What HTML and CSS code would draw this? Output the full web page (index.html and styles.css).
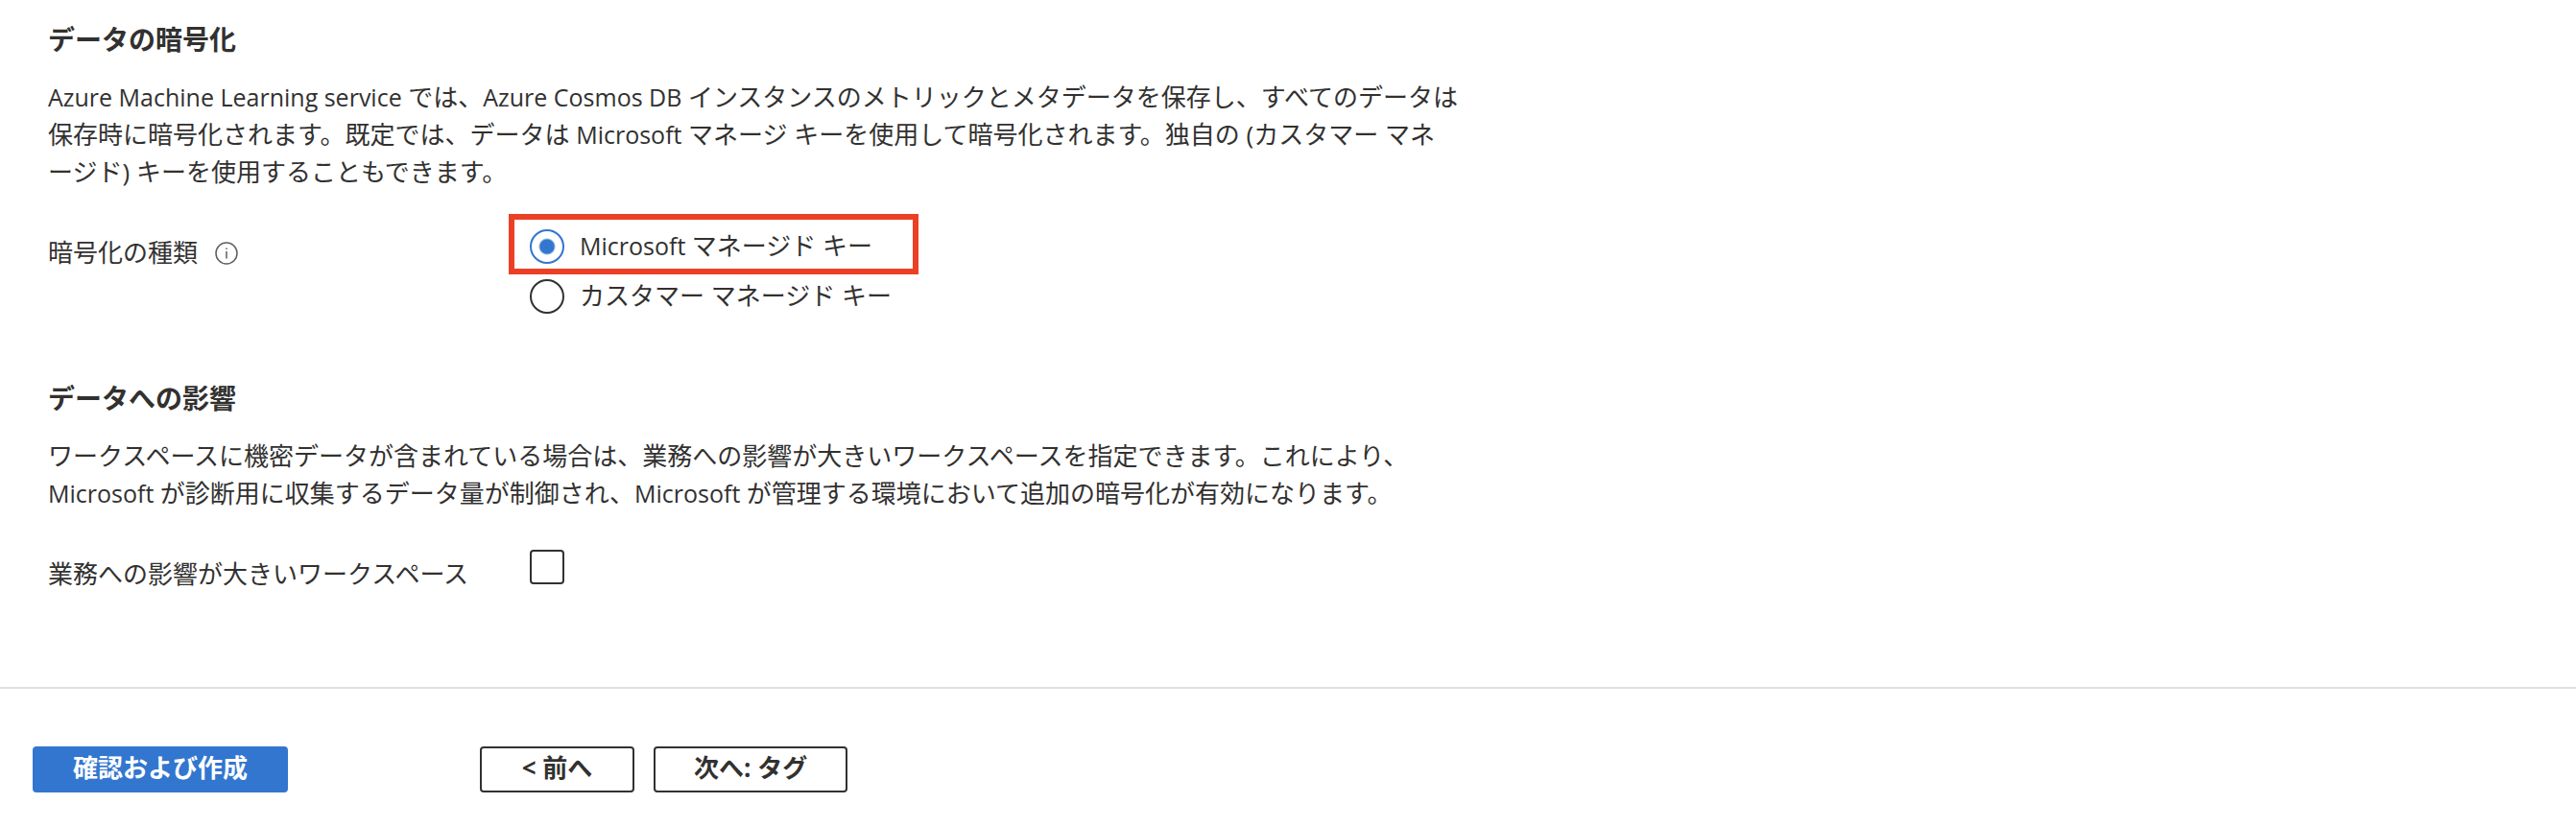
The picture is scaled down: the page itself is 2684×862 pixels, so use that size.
FILE: index.html
```html
<!DOCTYPE html>
<html lang="ja">
<head>
<meta charset="utf-8">
<meta name="viewport" content="width=device-width, initial-scale=1">
<title>Machine Learning ワークスペースの作成</title>
<link rel="stylesheet" href="styles.css">
</head>
<body>
<form class="page">
  <main class="content">
    <section class="section">
      <h2 class="heading">データの暗号化</h2>
      <p class="description"><span class="latin">Azure Machine Learning service </span>では、<span class="latin">Azure Cosmos DB </span>インスタンスのメトリックとメタデータを保存し、すべてのデータは<br>保存時に暗号化されます。既定では、データは <span class="latin">Microsoft </span>マネージ キーを使用して暗号化されます。独自の (カスタマー マネ<br>ージド) キーを使用することもできます。</p>
      <div class="field" role="radiogroup" aria-labelledby="encryption-label">
        <div class="field-label">
          <span id="encryption-label">暗号化の種類</span>
          <svg class="info" viewBox="0 0 24 24" role="img" aria-label="情報"><circle cx="12" cy="12" r="11"/><path d="M12 10v7.500M12 6.500v1.500"/></svg>
        </div>
        <div class="options">
          <label class="option option-highlight"><input class="radio" type="radio" name="encryption" checked><span><span class="latin">Microsoft </span>マネージド キー</span></label>
          <label class="option"><input class="radio" type="radio" name="encryption"><span>カスタマー マネージド キー</span></label>
        </div>
      </div>
    </section>
    <section class="section">
      <h2 class="heading">データへの影響</h2>
      <p class="description">ワークスペースに機密データが含まれている場合は、業務への影響が大きいワークスペースを指定できます。これにより、<br><span class="latin">Microsoft </span>が診断用に収集するデータ量が制御され、<span class="latin">Microsoft </span>が管理する環境において追加の暗号化が有効になります。</p>
      <div class="field">
        <label class="field-label" for="impact">業務への影響が大きいワークスペース</label>
        <div class="check-cell"><input class="checkbox" type="checkbox" id="impact"></div>
      </div>
    </section>
  </main>
  <footer class="footer">
    <button class="button button-primary" type="submit">確認および作成</button>
    <div class="steps">
      <button class="button" type="button">&lt; 前へ</button>
      <button class="button" type="button">次へ: タグ</button>
    </div>
  </footer>
</form>
</body>
</html>
```
FILE: styles.css
```css
* {
  box-sizing: border-box;
}

body {
  margin: 0;
  background: #fff;
  color: #323130;
  font-family: "Open Sans", "Noto Sans CJK JP", sans-serif;
  font-size: 26px;
  line-height: 39px;
}

.content {
  display: flex;
  flex-direction: column;
  gap: 60px;
  padding: 20px 50px 98px;
}

.heading {
  margin: 0 0 20px;
  font-size: 28px;
  line-height: 42px;
  font-weight: 700;
}

.description {
  max-width: 1484px;
  margin: 0 0 24px;
}

.latin {
  font-size: 25px;
}

.field {
  display: grid;
  grid-template-columns: 480px 1fr;
  align-items: start;
}

.field-label {
  display: flex;
  align-items: center;
  gap: 18px;
  padding-top: 21px;
}

.info {
  width: 24px;
  height: 24px;
  fill: none;
  stroke: #605e5c;
  stroke-width: 1.5;
}

.options {
  display: flex;
  flex-direction: column;
  align-items: flex-start;
}

.option {
  display: flex;
  align-items: center;
  gap: 16px;
  padding: 3px 22px 6px;
}

.option-highlight {
  padding: 8px 42px 4px 16px;
  border: 6px solid #eb4025;
}

.radio,
.checkbox {
  appearance: none;
  flex: none;
  width: 36px;
  height: 36px;
  margin: 0;
  border: 2px solid #323130;
  background: #fff;
}

.radio {
  border-radius: 50%;
}

.radio:checked {
  border-color: #3276cf;
  background: radial-gradient(circle, #3276cf 7px, #fff 9px);
}

.checkbox {
  display: block;
  border-radius: 4px;
}

.check-cell {
  padding: 15px 22px 0;
}

.footer {
  display: flex;
  align-items: center;
  gap: 200px;
  padding: 60px 34px 36px;
  border-top: 2px solid #e1dfdd;
}

.steps {
  display: flex;
  gap: 20px;
}

.button {
  min-width: 161px;
  height: 48px;
  padding: 0 40px 4px;
  border: 2px solid #323130;
  border-radius: 4px;
  background: #fff;
  color: #323130;
  font-family: inherit;
  font-size: 26px;
  line-height: 36px;
  font-weight: 700;
}

.button-primary {
  border-color: #3276cf;
  background: #3276cf;
  color: #fff;
}
```
